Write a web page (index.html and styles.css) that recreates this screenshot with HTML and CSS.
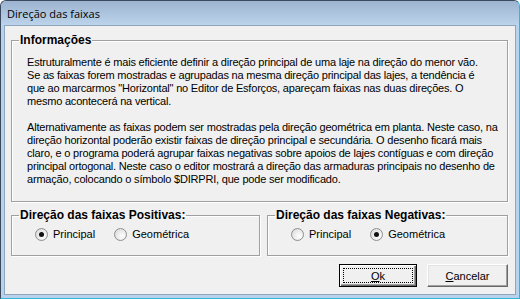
FILE: index.html
```html
<!DOCTYPE html>
<html lang="pt">

<head>
    <meta charset="UTF-8" />
    <title>Direção das faixas</title>
    <link rel="stylesheet" href="styles.css">
</head>

<body>
    <div class="window">
        <div class="titlebar">Direção das faixas</div>

        <div class="client">
            <fieldset class="group info">
                <legend>Informações</legend>
                <p>
                    Estruturalmente é mais eficiente definir a direção principal de uma laje na direção do menor vão.<br>
                    Se as faixas forem mostradas e agrupadas na mesma direção principal das lajes, a tendência é<br>
                    que ao marcarmos "Horizontal" no Editor de Esforços, apareçam faixas nas duas direções. O<br>
                    mesmo acontecerá na vertical.
                </p>
                <p>
                    Alternativamente as faixas podem ser mostradas pela direção geométrica em planta. Neste caso, na<br>
                    direção horizontal poderão existir faixas de direção principal e secundária. O desenho ficará mais<br>
                    claro, e o programa poderá agrupar faixas negativas sobre apoios de lajes contíguas e com direção<br>
                    principal ortogonal. Neste caso o editor mostrará a direção das armaduras principais no desenho de<br>
                    armação, colocando o símbolo $DIRPRI, que pode ser modificado.
                </p>
            </fieldset>

            <div class="options">
                <fieldset class="group positive">
                    <legend>Direção das faixas Positivas:</legend>
                    <div class="radios">
                        <label class="radio"><input type="radio" name="pos" checked>Principal</label>
                        <label class="radio"><input type="radio" name="pos">Geométrica</label>
                    </div>
                </fieldset>

                <fieldset class="group negative">
                    <legend>Direção das faixas Negativas:</legend>
                    <div class="radios">
                        <label class="radio"><input type="radio" name="neg">Principal</label>
                        <label class="radio"><input type="radio" name="neg" checked>Geométrica</label>
                    </div>
                </fieldset>
            </div>

            <div class="actions">
                <button class="btn btn-default"><span class="focus"><u>O</u>k</span></button>
                <button class="btn btn-cancel"><u>C</u>ancelar</button>
            </div>
        </div>
    </div>
</body>

</html>
```

FILE: styles.css
```css
body {
    margin: 0;
    padding: 0;
    font-family: 'Liberation Sans', Arial, sans-serif;
    font-size: 11px;
    color: #000;
}

.window {
    width: 520px;
    height: 299px;
    box-sizing: border-box;
    border: 1px solid #3a4a5c;
    border-right-color: #2fb6d8;
    border-bottom-color: #2fb6d8;
    border-radius: 6px 6px 0 0;
    background-color: #b9d1ea;
    padding: 0 3px 3px;
    display: flex;
    flex-direction: column;
    overflow: hidden;
}

.titlebar {
    flex-shrink: 0;
    height: 24px;
    margin: 0 -3px;
    padding-left: 6px;
    display: flex;
    align-items: center;
    border-radius: 5px 5px 0 0;
    background: linear-gradient(#9cb4d0, #bcd3eb);
    font-family: 'Open Sans', sans-serif;
    font-size: 11px;
}

.client {
    flex: 1;
    min-height: 0;
    background-color: #f0f0f0;
    border: 1px solid #8fa6bf;
    display: flex;
    flex-direction: column;
    padding: 7px 7px 0 6px;
}

/* group boxes */
.group {
    margin: 0;
    border: 1px solid #a0a0a0;
    box-shadow: 1px 1px 0 #fff, inset 1px 1px 0 #fff;
    padding: 0;
    min-width: 0;
}

.group legend {
    margin-left: 7px;
    padding: 0 1px;
    font-weight: bold;
    font-size: 12px;
    line-height: 14px;
}

.info p {
    margin: 0 0 0 15px;
    line-height: 13px;
    white-space: nowrap;
    letter-spacing: -0.2px;
}

.info p:first-of-type {
    margin-top: 9px;
}

.info p + p {
    margin-top: 13px;
    margin-bottom: 15px;
}

.options {
    display: flex;
    gap: 7px;
    margin-top: 6px;
}

.positive {
    width: 249px;
    box-sizing: border-box;
}

.negative {
    flex: 1;
}

.radios {
    display: flex;
    align-items: center;
    height: 14px;
    padding: 5px 0 14px 23px;
}

.radio {
    display: flex;
    align-items: center;
    margin-right: 19px;
}

.radio input {
    appearance: none;
    width: 13px;
    height: 13px;
    margin: 0 5px 0 0;
    border: 1px solid #8e8f8f;
    border-radius: 50%;
    background: radial-gradient(circle at 65% 65%, #fff 0, #e6e6e6 60%, #cfcfcf 100%);
    box-sizing: border-box;
    position: relative;
}

.radio input:checked::after {
    content: '';
    position: absolute;
    left: 3px;
    top: 3px;
    width: 5px;
    height: 5px;
    border-radius: 50%;
    background: #111;
}

/* buttons */
.actions {
    display: flex;
    justify-content: flex-end;
    gap: 10px;
    margin-top: 8px;
}

.btn {
    height: 23px;
    box-sizing: border-box;
    font-family: inherit;
    font-size: 11px;
    background-color: #f0f0f0;
    border: 1px solid;
    border-color: #fff #696969 #696969 #fff;
    box-shadow: inset -1px -1px 0 #a0a0a0, inset 1px 1px 0 #e3e3e3;
    padding: 0;
    color: #000;
}

.btn u {
    text-decoration-thickness: 1px;
}

.btn-default {
    width: 78px;
    border: 1px solid #000;
    box-shadow: inset 1px 1px 0 #fff, inset -1px -1px 0 #696969, inset -2px -2px 0 #a0a0a0;
    padding: 3px;
}

.btn-default .focus {
    display: flex;
    align-items: center;
    justify-content: center;
    height: 100%;
    border: 1px dotted #000;
    box-sizing: border-box;
}

.btn-cancel {
    width: 81px;
}
```
